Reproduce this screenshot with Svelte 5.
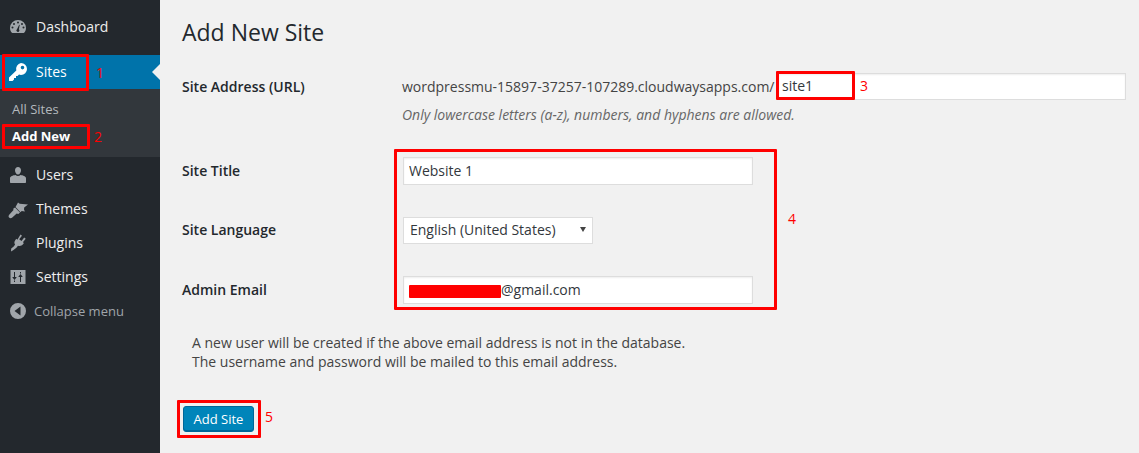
<script>
    const menuTop = [
        { label: "Dashboard", icon: "dashboard" }
    ]
    const menuBottom = [
        { label: "Users", icon: "users" },
        { label: "Themes", icon: "themes" },
        { label: "Plugins", icon: "plugins" },
        { label: "Settings", icon: "settings" }
    ]
</script>

{#snippet icon(name)}
    <svg class="icon" viewBox="0 0 20 20" width="20" height="20" fill="currentColor">
        {#if name === "dashboard"}
            <path fill-rule="evenodd" d="M10 3a8 8 0 0 0-8 8c0 2.200.9 4.200 2.300 5h11.400c1.400-.8 2.300-2.800 2.300-5a8 8 0 0 0-8-8zM10 4.500a1 1 0 1 1 0 2 1 1 0 0 1 0-2zM6 6a1 1 0 1 1 0 2 1 1 0 0 1 0-2zM14 6a1 1 0 1 1 0 2 1 1 0 0 1 0-2zM4.500 9.500a1 1 0 1 1 0 2 1 1 0 0 1 0-2zM15.500 9.500a1 1 0 1 1 0 2 1 1 0 0 1 0-2zM11.200 7.700l.5.300-.8 4.300a1.500 1.500 0 1 1-1.900-.1z"/>
        {:else if name === "users"}
            <path d="M10 2c1.800 0 3 1.400 3 3.200S11.800 9.500 10 9.500 7 7 7 5.200 8.200 2 10 2zM7.500 10c.7.700 1.500 1 2.500 1s1.800-.3 2.500-1c2.400.3 5.500 1.300 5.500 3.300V17c0 .6-.4 1-1 1H3c-.6 0-1-.4-1-1v-3.700c0-2 3.100-3 5.500-3.300z"/>
        {:else if name === "themes"}
            <path d="M10 3.500l1.700 1.300 8.300.7-3.800 3-.2 2 .9 2-3.200-.6-1.200 1.300-5-5.200zM7 8.500l5 5-1.700 1.600-1.600-.6-4.700 4.200c-.8.700-2.200.6-2.900-.1-.7-.8-.7-2.100.1-2.900l4.300-4.600-.3-1.400z"/>
        {:else if name === "plugins"}
            <path d="M12.500 1.500l1.500 1.200-2.800 3.600 2.300 1.700 2.700-3.500 1.500 1.200-2.800 3.600 1 .8-.9 1.200c-1.300 1.500-3 2.200-5 1.400l-1.600 2.100L5.500 17 3 18.500l.2-2.900 2.500-2 1.400-2C6 10.200 6.200 8.500 7.400 7l.9-1.200 1.100.9z"/>
        {:else if name === "settings"}
            <path fill-rule="evenodd" d="M2.500 3h15v14h-15zM6 5v5H4.200L6.500 13 8.800 10H7V5zM6 13.500V15h1v-1.500zM13 15v-5h1.800L12.500 7 10.200 10H12v5zM13 6.500V5h-1v1.500z"/>
        {:else if name === "sites"}
            <path fill-rule="evenodd" d="M13 1a6 6 0 0 1 0 12c-.7 0-1.400-.1-2-.4L9.500 14H8v2H6v1.500L4.500 19H1v-3.500l7.300-7A6 6 0 0 1 13 1zM14.500 3.800a1.800 1.800 0 1 0 0 3.600 1.800 1.800 0 0 0 0-3.600z"/>
        {:else if name === "collapse"}
            <path fill-rule="evenodd" d="M10 2a8 8 0 1 1 0 16 8 8 0 0 1 0-16zM12.500 5.500L6.500 10l6 4.500z"/>
        {/if}
    </svg>
{/snippet}

<div class="page">
    <aside>
        <ul class="menu">
            {#each menuTop as item}
                <li class="item">{@render icon(item.icon)}<span>{item.label}</span></li>
            {/each}
        </ul>
        <div class="current-wrap">
            <div class="item current">{@render icon("sites")}<span>Sites</span></div>
            <ul class="submenu">
                <li>All Sites</li>
                <li class="on">Add New</li>
            </ul>
        </div>
        <ul class="menu">
            {#each menuBottom as item}
                <li class="item">{@render icon(item.icon)}<span>{item.label}</span></li>
            {/each}
            <li class="item collapse">{@render icon("collapse")}<span>Collapse menu</span></li>
        </ul>
    </aside>

    <main>
        <h1>Add New Site</h1>
        <form>
            <div class="row address">
                <div class="label">Site Address (URL)</div>
                <div class="field">
                    <div class="url-line">
                        <span>wordpressmu-15897-37257-107289.cloudwaysapps.com/</span>
                        <input class="site-input" type="text" value="site1">
                    </div>
                    <p class="hint">Only lowercase letters (a-z), numbers, and hyphens are allowed.</p>
                </div>
            </div>
            <div class="row title">
                <div class="label">Site Title</div>
                <div class="field"><input class="wide" type="text" value="Website 1"></div>
            </div>
            <div class="row language">
                <div class="label">Site Language</div>
                <div class="field">
                    <div class="select">English (United States)<i class="caret"></i></div>
                </div>
            </div>
            <div class="row email">
                <div class="label">Admin Email</div>
                <div class="field">
                    <div class="wide fake-input"><i class="redact"></i>@gmail.com</div>
                </div>
            </div>
            <p class="note">A new user will be created if the above email address is not in the database.<br>The username and password will be mailed to this email address.</p>
            <button type="button">Add Site</button>
        </form>
    </main>

    <!-- red annotations drawn on top of the screenshot -->
    <div class="mark m1"></div>
    <div class="mark m2"></div>
    <div class="mark m3"></div>
    <div class="mark m4"></div>
    <div class="mark m5"></div>
    <span class="num n1">1</span>
    <span class="num n2">2</span>
    <span class="num n3">3</span>
    <span class="num n4">4</span>
    <span class="num n5">5</span>
</div>

<style>
    :global(body) {
        margin: 0;
        background: #f1f1f1;
    }

    .page {
        position: relative;
        display: flex;
        width: 1139px;
        height: 453px;
        overflow: hidden;
        font-family: "Open Sans", sans-serif;
        font-size: 14px;
        color: #444;
    }

    aside {
        width: 160px;
        flex: none;
        background: #23282d;
        padding-top: 10px;
        color: #eee;
    }

    ul {
        list-style: none;
        margin: 0;
        padding: 0;
    }

    .item {
        display: flex;
        align-items: center;
        height: 34px;
        position: relative;
    }

    .item span {
        padding-bottom: 2px;
    }

    .icon {
        width: 20px;
        height: 20px;
        margin-left: 8px;
        margin-right: 8px;
        flex: none;
        color: #a0a5aa;
    }

    .current-wrap {
        margin-top: 11px;
    }

    .current {
        background: #0073aa;
        color: #fff;
    }

    .current .icon {
        color: #fff;
    }

    .current::after {
        content: "";
        position: absolute;
        right: 0;
        top: 9px;
        border: 8px solid transparent;
        border-right-color: #f1f1f1;
    }

    .submenu {
        background: #32373c;
        padding: 7px 0 7px;
        height: 54px;
        margin-bottom: 1px;
        font-size: 13px;
        color: #b4b9be;
    }

    .submenu li {
        height: 27px;
        line-height: 27px;
        padding-left: 12px;
    }

    .submenu .on {
        color: #fff;
        font-weight: 700;
    }

    .collapse {
        font-size: 13px;
        color: #a0a5aa;
    }

    .collapse span {
        padding-bottom: 0;
    }

    .collapse .icon {
        margin-right: 6px;
    }

    main {
        flex: 1;
        padding-left: 22px;
        min-width: 0;
    }

    h1 {
        margin: 0;
        padding-top: 16px;
        font-size: 23px;
        line-height: 32px;
        font-weight: 400;
        color: #23282d;
    }

    .row {
        display: flex;
    }

    .label {
        width: 220px;
        flex: none;
        font-weight: 600;
        color: #23282d;
        line-height: 20px;
    }

    .address {
        margin-top: 25px;
        height: 84px;
    }

    .address .label {
        padding-top: 4px;
    }

    .title {
        height: 60px;
    }

    .title .label {
        padding-top: 4px;
    }

    .language {
        height: 59px;
    }

    .language .label {
        padding-top: 3px;
    }

    .email .label {
        padding-top: 4px;
    }

    .field {
        flex: 1;
        min-width: 0;
    }

    .url-line {
        display: flex;
        align-items: center;
        height: 27px;
        white-space: nowrap;
    }

    .url-line span {
        width: 376px;
        flex: none;
    }

    input, .fake-input {
        box-sizing: border-box;
        font-family: inherit;
        font-size: 14px;
        color: #32373c;
        background: #fff;
        border: 1px solid #ddd;
        outline: none;
        padding: 0 5px 2px;
        margin: 0;
        box-shadow: inset 0 1px 2px rgba(0, 0, 0, 0.07);
    }

    .site-input {
        width: 348px;
        height: 27px;
        padding-left: 3px;
    }

    .hint {
        margin: 4px 0 0;
        font-style: italic;
        color: #666;
        line-height: 21px;
    }

    .wide {
        display: block;
        width: 350px;
        height: 28px;
        margin-left: 1px;
    }

    .fake-input {
        display: flex;
        align-items: center;
    }

    .redact {
        width: 92px;
        height: 13px;
        background: #f00;
        border-radius: 1px;
        margin-top: 4px;
    }

    .select {
        box-sizing: border-box;
        position: relative;
        width: 190px;
        height: 27px;
        margin-left: 1px;
        padding-left: 6px;
        line-height: 24px;
        background: #fff;
        border: 1px solid #ddd;
        color: #32373c;
    }

    .caret {
        position: absolute;
        right: 6px;
        top: 9px;
        border: 3px solid transparent;
        border-top: 5px solid #444;
        border-bottom: 0;
    }

    .note {
        margin: 29px 0 0 10px;
        line-height: 19px;
    }

    button {
        display: block;
        width: 71px;
        height: 26px;
        margin: 35px 0 0 1px;
        padding: 0;
        font-family: inherit;
        font-size: 13px;
        color: #fff;
        background: #0085ba;
        border: 1px solid #006799;
        border-radius: 3px;
        box-shadow: inset 0 -1px 0 #006799;
    }

    .mark {
        position: absolute;
        box-sizing: border-box;
        border: 3px solid #f00;
        border-radius: 1px;
    }

    .m1 { left: 2px; top: 54px; width: 87px; height: 37px; }
    .m2 { left: 2px; top: 124px; width: 88px; height: 25px; }
    .m3 { left: 776px; top: 71px; width: 79px; height: 29px; }
    .m4 { left: 394px; top: 149px; width: 383px; height: 161px; }
    .m5 { left: 177px; top: 400px; width: 84px; height: 38px; }

    .num {
        position: absolute;
        color: #f00;
        font-size: 14px;
        line-height: 18px;
    }

    .n1 { left: 96px; top: 64px; }
    .n2 { left: 94px; top: 128px; }
    .n3 { left: 860px; top: 77px; }
    .n4 { left: 788px; top: 210px; }
    .n5 { left: 265px; top: 408px; }
</style>
